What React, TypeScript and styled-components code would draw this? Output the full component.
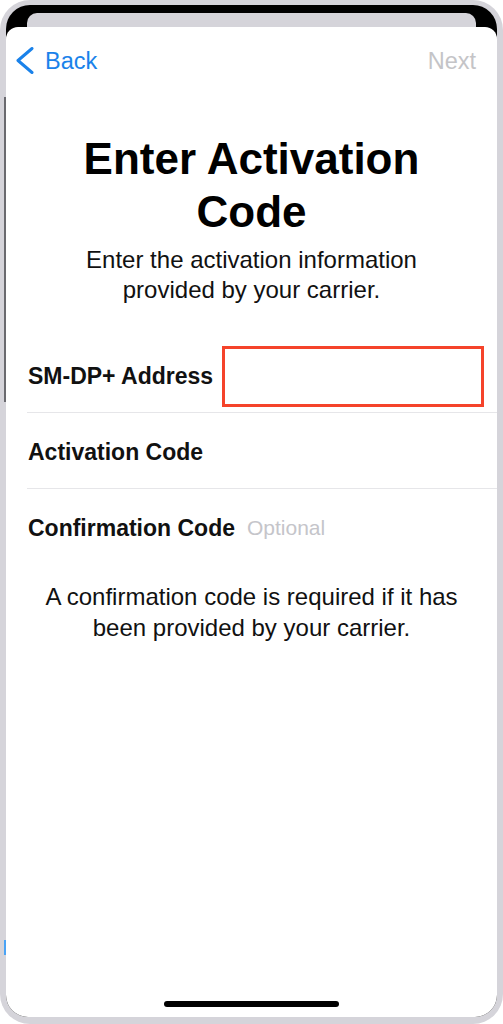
import React from "react";
import styled, { createGlobalStyle } from "styled-components";

const GlobalStyle = createGlobalStyle`
  html, body {
    margin: 0;
    padding: 0;
    background: #ffffff;
  }
  body {
    font-family: "Liberation Sans", Arial, sans-serif;
    -webkit-font-smoothing: antialiased;
  }
`;

const Frame = styled.div`
  position: relative;
  width: 503px;
  height: 1024px;
  box-sizing: border-box;
  padding: 5px 6px 7px 6px;
  background: #d5d4da;
  border-radius: 30px;
  display: flex;
`;

const SideMark = styled.span<{ $top: number; $height: number; $color: string }>`
  position: absolute;
  left: 4px;
  width: 2px;
  top: ${(p) => p.$top}px;
  height: ${(p) => p.$height}px;
  background: ${(p) => p.$color};
`;

const Screen = styled.div`
  flex: 1;
  display: flex;
  flex-direction: column;
  background: #000000;
  border-radius: 24px 24px 22px 22px;
  overflow: hidden;
`;

const BackCard = styled.div`
  flex-shrink: 0;
  height: 14px;
  margin: 8px 21px 0;
  background: #d5d4da;
  border-radius: 10px 10px 0 0;
`;

const Sheet = styled.main`
  flex: 1;
  display: flex;
  flex-direction: column;
  background: #ffffff;
  border-radius: 12px 12px 0 0;
`;

const Nav = styled.nav`
  flex-shrink: 0;
  height: 68px;
  display: flex;
  align-items: center;
  justify-content: space-between;
  padding: 0 21px 0 9px;
`;

const NavButton = styled.button<{ $disabled?: boolean }>`
  display: flex;
  align-items: center;
  gap: 10px;
  background: none;
  border: 0;
  padding: 0;
  font-family: inherit;
  font-size: 23.5px;
  color: ${(p) => (p.$disabled ? "#c4c4c7" : "#1a82ea")};
  cursor: pointer;
`;

const Title = styled.h1`
  margin: 37px 0 0;
  text-align: center;
  font-size: 44px;
  font-weight: 700;
  line-height: 53px;
  color: #000000;
  white-space: nowrap;
`;

const Subtitle = styled.p`
  margin: 7px 0 0;
  text-align: center;
  font-size: 24px;
  line-height: 30px;
  color: #111111;
  white-space: nowrap;
`;

const FieldList = styled.div`
  margin: 32px 0 0 21px;
`;

const Row = styled.div<{ $last?: boolean }>`
  height: 76px;
  box-sizing: border-box;
  padding: 3px 13px 0 1px;
  display: flex;
  align-items: center;
  border-bottom: 1px solid ${(p) => (p.$last ? "transparent" : "#e6e6e9")};
`;

const Label = styled.label`
  font-size: 23px;
  font-weight: 700;
  color: #111111;
  white-space: nowrap;
`;

const AddressInput = styled.input`
  margin-left: auto;
  width: 262px;
  height: 61px;
  box-sizing: border-box;
  border: 3px solid #f5432a;
  background: transparent;
  outline: none;
  padding: 0 10px;
  font-family: inherit;
  font-size: 22px;
`;

const Hint = styled.span`
  margin-left: 12px;
  font-size: 21px;
  color: #c5c5ca;
`;

const Note = styled.p`
  margin: 16px 0 0;
  text-align: center;
  font-size: 24px;
  line-height: 31px;
  color: #111111;
  white-space: nowrap;
`;

const HomeIndicator = styled.div`
  margin: auto auto 10px;
  width: 175px;
  height: 6px;
  border-radius: 3px;
  background: #000000;
`;

const Chevron = () => (
  <svg width="20" height="28" viewBox="0 0 20 28" aria-hidden="true">
    <path
      d="M17 1.5 L3 13.5 L17 25.5"
      fill="none"
      stroke="currentColor"
      strokeWidth="3"
      strokeLinecap="round"
      strokeLinejoin="round"
    />
  </svg>
);

export default function App() {
  return (
    <>
      <GlobalStyle />
      <Frame>
        <SideMark $top={97} $height={305} $color="#6a6a6f" />
        <SideMark $top={940} $height={15} $color="#4aa3f5" />
        <Screen>
          <BackCard />
          <Sheet>
            <Nav>
              <NavButton type="button">
                <Chevron />
                Back
              </NavButton>
              <NavButton type="button" $disabled>
                Next
              </NavButton>
            </Nav>
            <Title>
              Enter Activation
              <br />
              Code
            </Title>
            <Subtitle>
              Enter the activation information
              <br />
              provided by your carrier.
            </Subtitle>
            <FieldList>
              <Row>
                <Label htmlFor="smdp">SM-DP+ Address</Label>
                <AddressInput id="smdp" type="text" />
              </Row>
              <Row>
                <Label>Activation Code</Label>
              </Row>
              <Row $last>
                <Label>Confirmation Code</Label>
                <Hint>Optional</Hint>
              </Row>
            </FieldList>
            <Note>
              A confirmation code is required if it has
              <br />
              been provided by your carrier.
            </Note>
            <HomeIndicator />
          </Sheet>
        </Screen>
      </Frame>
    </>
  );
}
